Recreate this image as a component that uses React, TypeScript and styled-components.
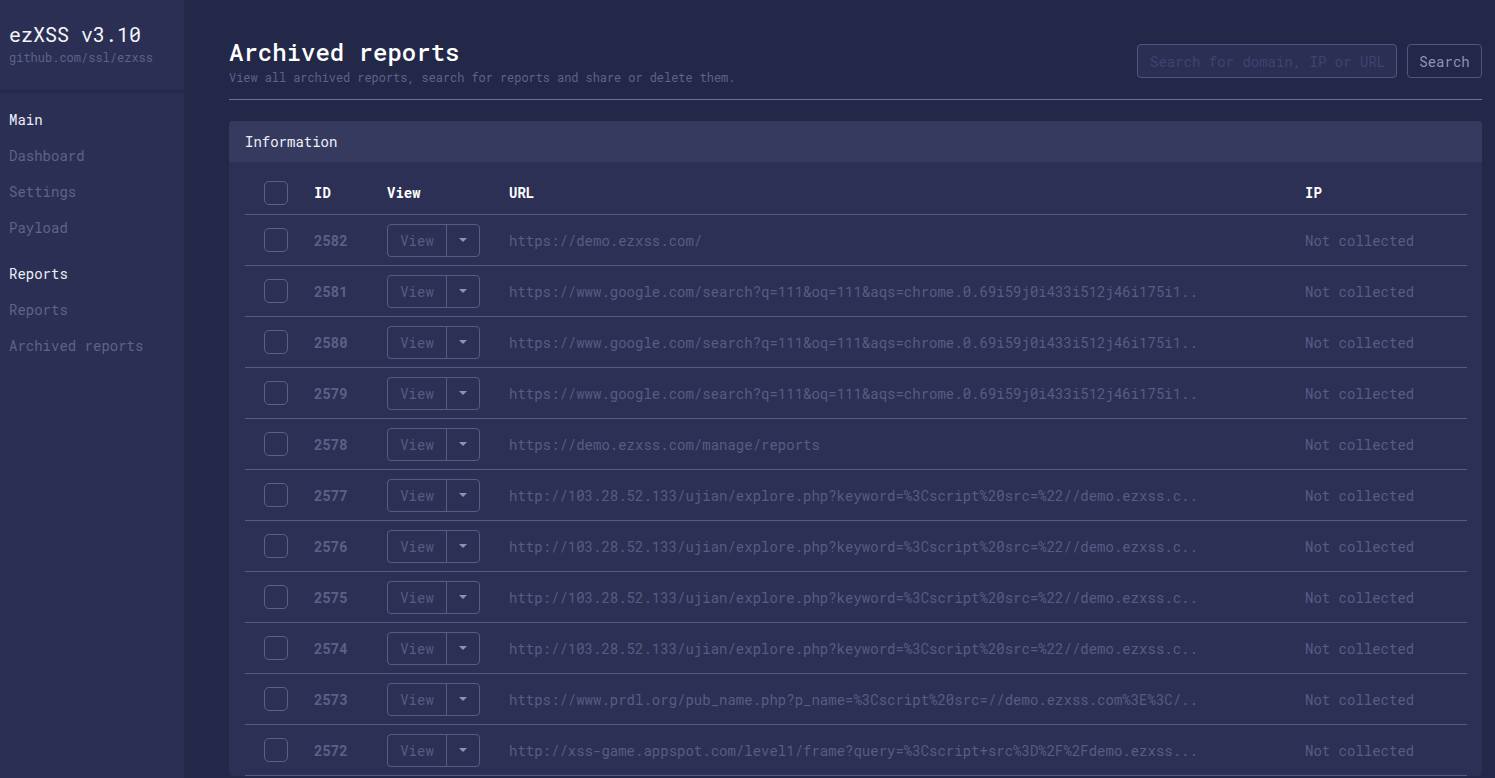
import React from "react";
import styled, { createGlobalStyle } from "styled-components";

const Global = createGlobalStyle`
  html, body { margin: 0; padding: 0; overflow: hidden; background: #232748; }
  * { box-sizing: border-box; }
  body { font-family: "Roboto Mono", "Liberation Mono", "DejaVu Sans Mono", monospace; }
`;

const Layout = styled.div`
  display: flex;
  min-height: 100vh;
`;

const Sidebar = styled.aside`
  width: 184px;
  flex-shrink: 0;
  background: #2b2f54;
  display: flex;
  flex-direction: column;
`;

const Brand = styled.div`
  height: 93px;
  padding: 22px 9px 0;
  border-bottom: 4px solid #262a4b;
  background: #2b2f54;
`;

const BrandTitle = styled.div`
  font-size: 20px;
  color: #f4f5fb;
  line-height: 24px;
`;

const BrandSub = styled.div`
  font-size: 12px;
  color: #5c6388;
  line-height: 16px;
  margin-top: 3px;
`;

const Nav = styled.nav`
  padding: 9px 9px 0;
  display: flex;
  flex-direction: column;
`;

const NavGroup = styled.div`
  display: flex;
  flex-direction: column;
  margin-bottom: 10px;
`;

const NavItem = styled.div<{ $head?: boolean }>`
  font-size: 14px;
  line-height: 20px;
  padding: 8px 0;
  color: ${(p) => (p.$head ? "#eceef7" : "#5d6487")};
`;

const Main = styled.main`
  flex: 1;
  padding: 38px 13px 0 45px;
  min-width: 0;
`;

const PageHead = styled.div`
  display: flex;
  justify-content: space-between;
  align-items: flex-start;
  padding-bottom: 14px;
  border-bottom: 1px solid #6a7097;
`;

const TitleBlock = styled.div`
  display: flex;
  flex-direction: column;
`;

const Title = styled.h1`
  margin: 0;
  font-size: 24px;
  line-height: 28px;
  font-weight: 500;
  color: #ffffff;
`;

const Subtitle = styled.div`
  font-size: 12px;
  line-height: 16px;
  color: #5d6488;
  margin-top: 3px;
  letter-spacing: -0.07px;
`;

const SearchForm = styled.div`
  display: flex;
  gap: 10px;
  margin-top: 6px;
`;

const SearchInput = styled.input`
  width: 260px;
  height: 34px;
  background: #2b2f54;
  border: 1px solid #4f5680;
  border-radius: 4px;
  padding: 0 12px;
  font-family: inherit;
  font-size: 14px;
  color: #cfd3e6;
  outline: none;
  &::placeholder { color: #3e4470; }
`;

const SearchButton = styled.button`
  height: 34px;
  width: 75px;
  background: transparent;
  border: 1px solid #4f5680;
  border-radius: 4px;
  font-family: inherit;
  font-size: 14px;
  color: #8e95b8;
  cursor: pointer;
`;

const Card = styled.section`
  margin-top: 21px;
  background: #2c3054;
  border-radius: 4px;
  overflow: hidden;
`;

const CardHeader = styled.div`
  background: #363a5e;
  height: 41px;
  padding: 0 16px;
  display: flex;
  align-items: center;
  font-size: 14px;
  color: #eef0f8;
`;

const CardBody = styled.div`
  padding: 9px 15px 0 16px;
`;

const Row = styled.div<{ $head?: boolean }>`
  display: grid;
  grid-template-columns: 69px 73px 122px 796px 1fr;
  align-items: center;
  height: ${(p) => (p.$head ? "44px" : "51px")};
  border-bottom: 1px solid #565c85;
  font-size: 14px;
`;

const HeadCell = styled.div`
  font-weight: 700;
  color: #ffffff;
`;

const IdCell = styled.div`
  font-weight: 700;
  color: #5a6189;
`;

const TextCell = styled.div`
  color: #565d84;
  white-space: nowrap;
  overflow: hidden;
`;

const Check = styled.span`
  display: block;
  width: 24px;
  height: 24px;
  margin-left: 19px;
  border: 1px solid #5a6089;
  border-radius: 5px;
`;

const BtnGroup = styled.div`
  display: inline-flex;
  width: 93px;
  height: 33px;
  border: 1px solid #555c86;
  border-radius: 4px;
`;

const BtnMain = styled.span`
  width: 59px;
  display: flex;
  align-items: center;
  justify-content: center;
  color: #555c84;
  border-right: 1px solid #555c86;
`;

const BtnCaret = styled.span`
  flex: 1;
  display: flex;
  align-items: center;
  justify-content: center;
  &::after {
    content: "";
    border-left: 4px solid transparent;
    border-right: 4px solid transparent;
    border-top: 4px solid #8d93b5;
  }
`;

const g = "https://www.google.com/search?q=111&oq=111&aqs=chrome.0.69i59j0i433i512j46i175i1..";
const u = "http://103.28.52.133/ujian/explore.php?keyword=%3Cscript%20src=%22//demo.ezxss.c..";

const rows: [number, string][] = [
  [2582, "https://demo.ezxss.com/"],
  [2581, g],
  [2580, g],
  [2579, g],
  [2578, "https://demo.ezxss.com/manage/reports"],
  [2577, u],
  [2576, u],
  [2575, u],
  [2574, u],
  [2573, "https://www.prdl.org/pub_name.php?p_name=%3Cscript%20src=//demo.ezxss.com%3E%3C/.."],
  [2572, "http://xss-game.appspot.com/level1/frame?query=%3Cscript+src%3D%2F%2Fdemo.ezxss..."],
];

export default function App() {
  return (
    <>
      <Global />
      <Layout>
        <Sidebar>
          <Brand>
            <BrandTitle>ezXSS v3.10</BrandTitle>
            <BrandSub>github.com/ssl/ezxss</BrandSub>
          </Brand>
          <Nav>
            <NavGroup>
              <NavItem $head>Main</NavItem>
              <NavItem>Dashboard</NavItem>
              <NavItem>Settings</NavItem>
              <NavItem>Payload</NavItem>
            </NavGroup>
            <NavGroup>
              <NavItem $head>Reports</NavItem>
              <NavItem>Reports</NavItem>
              <NavItem>Archived reports</NavItem>
            </NavGroup>
          </Nav>
        </Sidebar>
        <Main>
          <PageHead>
            <TitleBlock>
              <Title>Archived reports</Title>
              <Subtitle>View all archived reports, search for reports and share or delete them.</Subtitle>
            </TitleBlock>
            <SearchForm>
              <SearchInput placeholder="Search for domain, IP or URL" />
              <SearchButton>Search</SearchButton>
            </SearchForm>
          </PageHead>
          <Card>
            <CardHeader>Information</CardHeader>
            <CardBody>
              <Row $head>
                <Check />
                <HeadCell>ID</HeadCell>
                <HeadCell>View</HeadCell>
                <HeadCell>URL</HeadCell>
                <HeadCell>IP</HeadCell>
              </Row>
              {rows.map(([id, url]) => (
                <Row key={id}>
                  <Check />
                  <IdCell>{id}</IdCell>
                  <div>
                    <BtnGroup>
                      <BtnMain>View</BtnMain>
                      <BtnCaret />
                    </BtnGroup>
                  </div>
                  <TextCell>{url}</TextCell>
                  <TextCell>Not collected</TextCell>
                </Row>
              ))}
            </CardBody>
          </Card>
        </Main>
      </Layout>
    </>
  );
}
